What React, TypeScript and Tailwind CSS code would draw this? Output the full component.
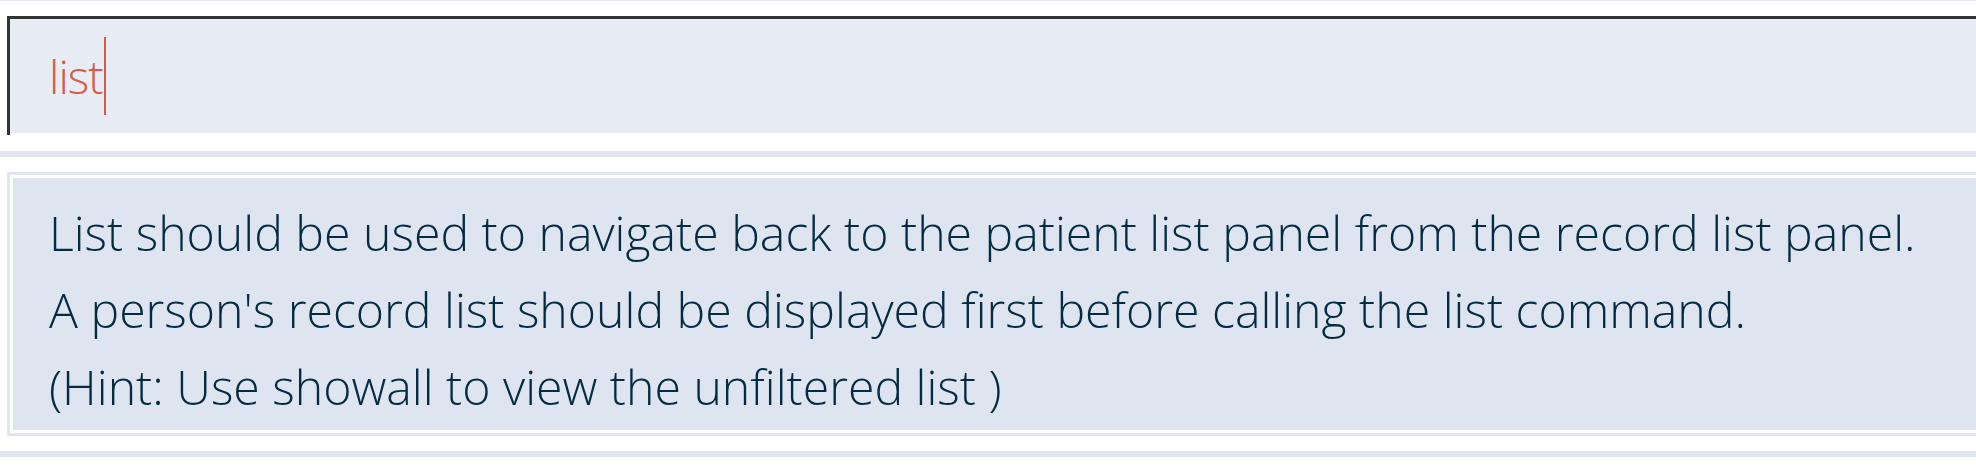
import React from 'react'

const font = { fontFamily: '"Open Sans", "Liberation Sans", sans-serif' }

export default function App() {
  return (
    <div className="w-[1976px] h-[473px] overflow-hidden bg-white" style={font}>
      {/* top strip */}
      <div className="h-px bg-[#e3e8f2]" />

      {/* command box */}
      <div className="mt-[15px] ml-[7px] border-l-[3px] border-[#333333]">
        <div className="h-[117px] border-t-[3px] border-[#333333] bg-[#e8ecf5] pl-[39px] flex items-center">
          <span className="text-[46px] font-light leading-none tracking-[-1px] text-[#d65b44]">list</span>
          <span className="ml-px w-[2px] h-[78px] bg-[#d65b44]" />
        </div>
        <div className="h-[2px]" />
      </div>

      {/* divider */}
      <div className="mt-[16px] h-[6px] bg-[#e1e6f1]" />

      {/* result display */}
      <div className="mt-[15px] ml-[7px] border-y-[3px] border-l-[3px] border-[#e1e6f1] bg-white py-[3px] pl-[3px]">
        <div className="h-[252px] bg-[#dfe5f0] pl-[36px] pt-[16px] text-[48.2px] font-light leading-[77px] whitespace-nowrap text-[#032b41]">
          <div>List should be used to navigate back to the patient list panel from the record list panel.</div>
          <div>A person's record list should be displayed first before calling the list command.</div>
          <div>(Hint: Use showall to view the unfiltered list )</div>
        </div>
      </div>

      {/* divider */}
      <div className="mt-[15px] h-[6px] bg-[#e1e6f1]" />
    </div>
  )
}
